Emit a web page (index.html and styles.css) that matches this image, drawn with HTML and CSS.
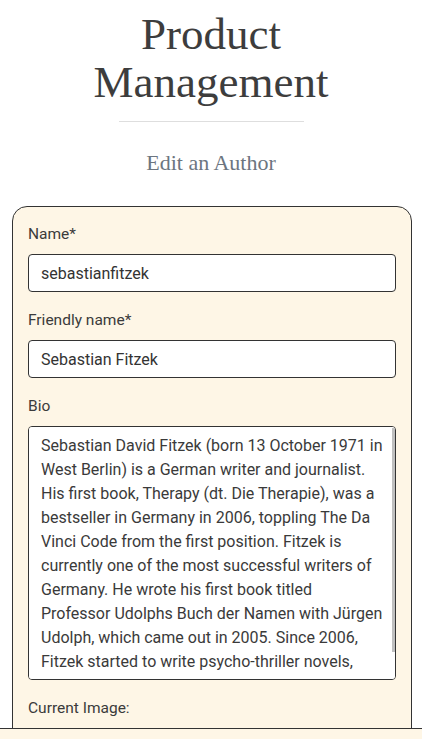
FILE: index.html
```html
<!DOCTYPE html>
<html lang="en">
<head>
<meta charset="utf-8">
<title>Product Management</title>
<link rel="stylesheet" href="styles.css">
</head>
<body>
<header class="page-head">
  <h1 class="title">Product Management</h1>
  <hr class="rule">
  <h2 class="subtitle">Edit an Author</h2>
</header>
<main class="wrap">
  <form class="card">
    <div class="field">
      <label class="label" for="name">Name*</label>
      <input class="control" id="name" type="text" value="sebastianfitzek">
    </div>
    <div class="field">
      <label class="label" for="fname">Friendly name*</label>
      <input class="control" id="fname" type="text" value="Sebastian Fitzek">
    </div>
    <div class="field">
      <label class="label" for="bio">Bio</label>
      <div class="bio-box">
        <textarea class="control bio" id="bio">Sebastian David Fitzek (born 13 October 1971 in West Berlin) is a German writer and journalist. His first book, Therapy (dt. Die Therapie), was a bestseller in Germany in 2006, toppling The Da Vinci Code from the first position. Fitzek is currently one of the most successful writers of Germany. He wrote his first book titled Professor Udolphs Buch der Namen with Jürgen Udolph, which came out in 2005. Since 2006, Fitzek started to write psycho-thriller novels, which have been translated into 24 languages.</textarea>
      </div>
    </div>
    <div class="field">
      <span class="label">Current Image:</span>
    </div>
  </form>
</main>
<footer class="foot"></footer>
</body>
</html>
```

FILE: styles.css
```css
* { box-sizing: border-box; }
html, body { margin: 0; padding: 0; background: #fff; }
body {
  font-family: Roboto, "Liberation Sans", Arial, sans-serif;
  color: #3b3b3b;
  font-size: 16px;
  line-height: 1.5;
}
.page-head {
  display: flex;
  flex-direction: column;
  align-items: center;
  text-align: center;
}
.title {
  margin: 10px 0 0;
  font-family: "Liberation Serif", "Times New Roman", serif;
  font-weight: 400;
  font-size: 45px;
  line-height: 48px;
  color: #3d3d3d;
  width: 260px;
}
.rule {
  width: 185px;
  margin: 15px 0 0;
  border: 0;
  border-top: 1px solid #dedede;
  height: 0;
}
.subtitle {
  margin: 28px 0 0;
  font-family: "Liberation Serif", "Times New Roman", serif;
  font-weight: 400;
  font-size: 22px;
  line-height: 26px;
  color: #6c7580;
}
.wrap {
  padding: 30px 10px 0 12px;
}
.card {
  width: 400px;
  background: #fef6e6;
  border: 1px solid #333;
  border-radius: 15px;
  padding: 15px 15px 40px;
  display: flex;
  flex-direction: column;
  gap: 16px;
}
.field {
  display: flex;
  flex-direction: column;
  gap: 8px;
}
.label {
  font-size: 15.5px;
  line-height: 24px;
  color: #3b3b3b;
}
.control {
  display: block;
  width: 100%;
  height: 38px;
  padding: 6px 12px;
  font-family: Roboto, "Liberation Sans", Arial, sans-serif;
  font-size: 16px;
  line-height: 24px;
  color: #333;
  background: #fff;
  border: 1px solid #333;
  border-radius: 4px;
  outline: none;
}
.bio-box {
  position: relative;
}
.bio-box::after {
  content: "";
  position: absolute;
  top: 2px;
  right: 1px;
  width: 3px;
  height: 224px;
  background: #c0c0c0;
}
.bio {
  height: 254px;
  padding: 7px 12px 6px 12px;
  line-height: 24px;
  color: #3a3a3a;
  resize: none;
  overflow-y: auto;
  scrollbar-width: none;
}
.foot {
  position: fixed;
  left: 0;
  right: 0;
  bottom: 0;
  height: 11px;
  background: #fef6e6;
  border-top: 1px solid #333;
}
```
